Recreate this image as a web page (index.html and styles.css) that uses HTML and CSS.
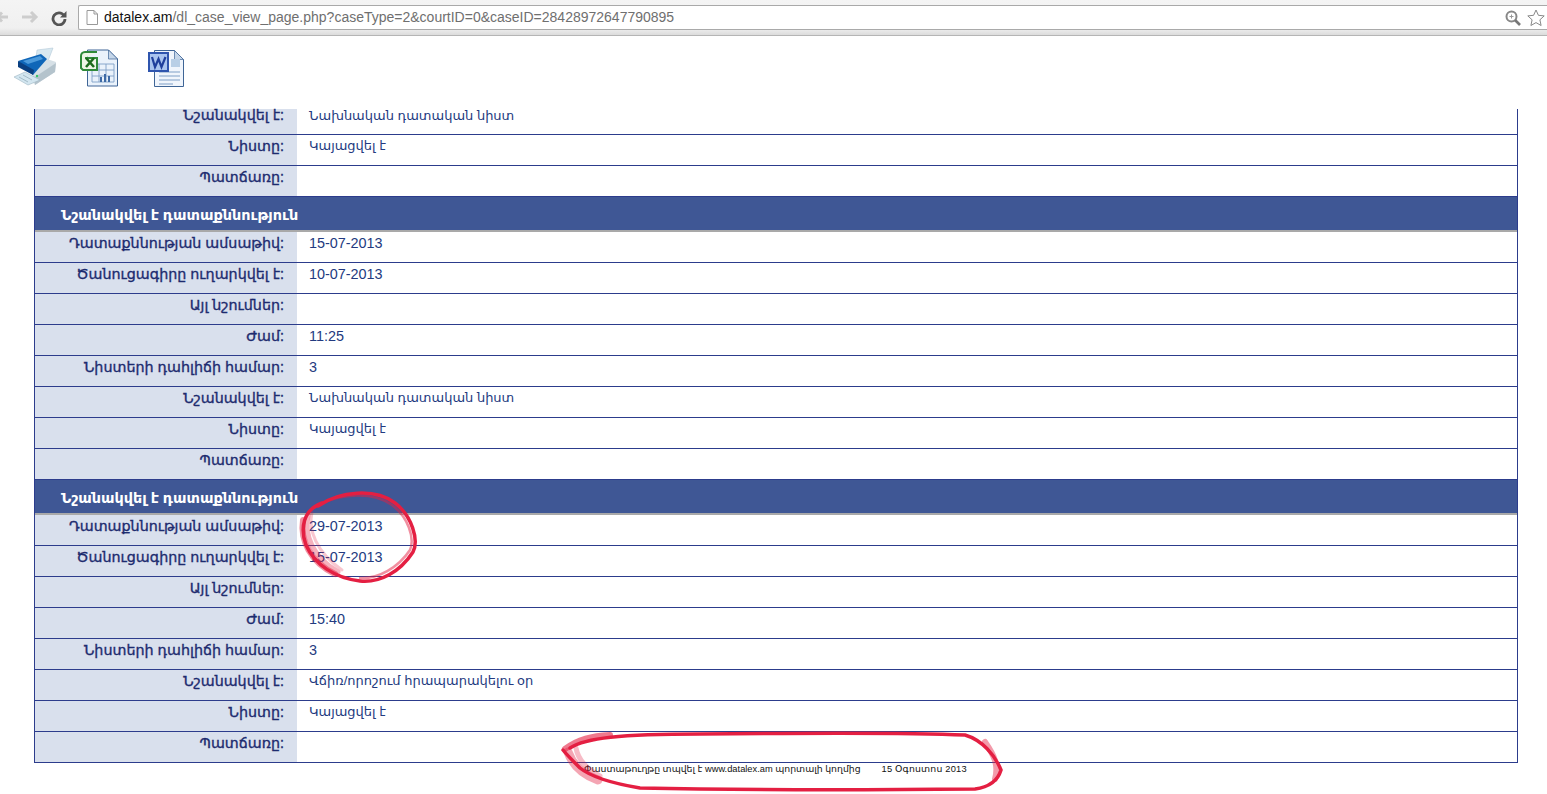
FILE: index.html
```html
<!DOCTYPE html>
<html lang="hy">
<head>
  <meta charset="UTF-8" />
  <title>datalex.am</title>
  <link rel="stylesheet" href="styles.css">
</head>
<body>

  <!-- Browser toolbar -->
  <div class="chrome">
    <svg class="nav-icon back" width="14" height="14" viewBox="0 0 14 14"><path d="M13 7H3M7 2.500 2.500 7 7 11.500" fill="none" stroke="#cdcdcd" stroke-width="3"/></svg>
    <svg class="nav-icon" width="18" height="14" viewBox="0 0 18 14"><path d="M1 7h14M10 2l5 5-5 5" fill="none" stroke="#cdcdcd" stroke-width="3"/></svg>
    <svg class="nav-icon" width="16" height="16" viewBox="0 0 16 16"><path d="M13 5.500A6 6 0 1 0 14 9" fill="none" stroke="#555" stroke-width="2.800"/><path d="M15.500 1v6.500H9z" fill="#555"/></svg>
    <div class="address">
      <svg width="12" height="15" viewBox="0 0 12 15"><path d="M1 .5h7l3.500 3.500v10.500H1z M8 .5V4h3.500" fill="#fff" stroke="#999"/></svg>
      <span class="url"><b>datalex.am</b>/dl_case_view_page.php?caseType=2&amp;courtID=0&amp;caseID=28428972647790895</span>
      <svg class="zoom-icon" width="16" height="16" viewBox="0 0 16 16"><circle cx="6.500" cy="6.500" r="5" fill="none" stroke="#888" stroke-width="2"/><path d="M10 10l5 5" stroke="#777" stroke-width="2.600"/><path d="M4.500 6.500h4M6.500 4.500v4" stroke="#999"/></svg>
      <svg width="18" height="18" viewBox="0 0 18 18"><path d="M9 1l2.400 5.300 5.800.6-4.300 3.900 1.200 5.700L9 13.600l-5.100 2.900 1.200-5.700L.8 6.900l5.800-.6z" fill="#fff" stroke="#888"/></svg>
    </div>
  </div>

  <!-- Export icons -->
  <div class="tools">
    <svg class="tool-printer" width="44" height="40" viewBox="0 0 44 40">
      <path d="M24 3 40 1l-5 13-12-3z" fill="#d8e8f0" stroke="#b3cad8" stroke-width=".6"/>
      <path d="M20 24 34 12l9 3-1 10-20 13-3-4z" fill="#d6e0e6"/>
      <path d="M22 30 43 16l-1 9-20 13z" fill="#b4c3cc"/>
      <path d="M5 14 28 7l6 5-14 16z" fill="#0f66b8"/>
      <path d="M10 14 27 9l3 3-15 5z" fill="#4d9bdc"/>
      <path d="M5 14v6l15 8 1-5z" fill="#0a3f80"/>
      <path d="M1 30l11-5 15 8-12 5z" fill="#d3e6f0" stroke="#9db5c3" stroke-width=".6"/>
      <path d="M6 30l9 5M10 28l9 5" stroke="#9db5c3" stroke-width=".9"/>
      <circle cx="24" cy="29" r="1.200" fill="#37c46b"/>
    </svg>
    <svg class="tool-excel" width="38" height="38" viewBox="0 0 38 38">
      <path d="M7.500 1h21l9 9v27h-30z" fill="#eaf2fb" stroke="#3f6596"/>
      <path d="M28.500 1v9h9z" fill="#c5d6e9" stroke="#3f6596" stroke-width=".7"/>
      <path d="M12 15h22v18H12zM12 21h22M12 27h22M19 15v18M26 15v18" fill="none" stroke="#7f9fc6" stroke-width=".9"/>
      <path d="M21 33v-5M25 33v-8M29 33v-6" stroke="#3e6aa6" stroke-width="2"/>
      <path d="M17 3H5C2.500 3 1 5 1 7v12l2 2h14V9H5" fill="#eef6e6" stroke="#2f8a3a" stroke-width="2"/>
      <path d="M6 9l8 9M14 9l-8 9" stroke="#1d6b1d" stroke-width="2.600"/>
    </svg>
    <svg class="tool-word" width="37" height="38" viewBox="0 0 37 38">
      <path d="M6.500 .5h20l9 9v27h-29z" fill="#f0f5fc" stroke="#3f6596"/>
      <path d="M26.500 .5v9h9z" fill="#c5d6e9" stroke="#3f6596" stroke-width=".7"/>
      <path d="M23 9h9v8h-9z" fill="#b9cfe6"/>
      <path d="M11 22h21M11 26h21M11 30h21M11 34h14" stroke="#7f9fc6"/>
      <rect x="1" y="3" width="19" height="18" fill="#a9c4ef" stroke="#2f55ae" stroke-width="2"/>
      <path d="M4 7l3 10 3.500-8 3 8 4-10" fill="none" stroke="#1f3f9c" stroke-width="2.200"/>
    </svg>
  </div>

  <!-- Case sessions -->
  <div class="sessions">
    <table class="case-table">
      <tr class="row-cut"><th>Նշանակվել է:</th><td>Նախնական դատական նիստ</td></tr>
      <tr><th>Նիստը:</th><td>Կայացվել է</td></tr>
      <tr><th>Պատճառը:</th><td></td></tr>
      <tr class="row-head"><td colspan="2">Նշանակվել է դատաքննություն</td></tr>
      <tr><th>Դատաքննության ամսաթիվ:</th><td class="num">15-07-2013</td></tr>
      <tr><th>Ծանուցագիրը ուղարկվել է:</th><td class="num">10-07-2013</td></tr>
      <tr><th>Այլ նշումներ:</th><td></td></tr>
      <tr><th>Ժամ:</th><td class="num">11:25</td></tr>
      <tr><th>Նիստերի դահլիճի համար:</th><td class="num">3</td></tr>
      <tr><th>Նշանակվել է:</th><td>Նախնական դատական նիստ</td></tr>
      <tr><th>Նիստը:</th><td>Կայացվել է</td></tr>
      <tr><th>Պատճառը:</th><td></td></tr>
      <tr class="row-head"><td colspan="2">Նշանակվել է դատաքննություն</td></tr>
      <tr><th>Դատաքննության ամսաթիվ:</th><td class="num">29-07-2013</td></tr>
      <tr><th>Ծանուցագիրը ուղարկվել է:</th><td class="num">15-07-2013</td></tr>
      <tr><th>Այլ նշումներ:</th><td></td></tr>
      <tr><th>Ժամ:</th><td class="num">15:40</td></tr>
      <tr><th>Նիստերի դահլիճի համար:</th><td class="num">3</td></tr>
      <tr><th>Նշանակվել է:</th><td>Վճիռ/որոշում հրապարակելու օր</td></tr>
      <tr><th>Նիստը:</th><td>Կայացվել է</td></tr>
      <tr><th>Պատճառը:</th><td></td></tr>
    </table>
    <p class="printed"><span>Փաստաթուղթը տպվել է www.datalex.am պորտալի կողմից</span><span class="printed-date">15 Օգոստոս 2013</span></p>
  </div>

  <!-- Red marker scribbles drawn over the screenshot -->
  <svg class="marks" width="1547" height="794" viewBox="0 0 1547 794">
    <g fill="none" stroke="#e41f42" stroke-linecap="round">
      <path d="M318 506C340 491 375 488 395 503C412 516 419 540 413 552C400 572 380 583 360 581C335 578 315 565 306 545C300 528 303 510 322 503" stroke-width="3.500"/>
      <path d="M320 504C342 494 372 491 392 505C408 517 415 538 410 550C398 568 378 579 360 578" stroke-width="2.500" opacity=".5"/>
      <path d="M303 520C300 540 310 562 335 574" stroke-width="6" opacity=".5"/>
      <path d="M308 515C304 535 312 556 338 572" stroke-width="5" opacity=".35"/>
      <path d="M312 512C308 530 316 552 342 570" stroke-width="3" opacity=".25"/>
      <path d="M570 748C585 738 620 734 700 734C800 733 900 732 965 735C982 740 995 755 1001 770C998 780 990 787 975 789C860 790 740 790 640 788C610 783 590 776 580 768C572 760 567 755 563 750" stroke-width="3.500"/>
      <path d="M565 749C578 739 592 736 610 735" stroke-width="6" opacity=".6"/>
      <path d="M568 752C573 766 584 775 598 780" stroke-width="9" opacity=".4"/>
      <path d="M576 748C578 760 588 770 600 776" stroke-width="5" opacity=".3"/>
      <path d="M985 742C994 755 999 765 995 779" stroke-width="6" opacity=".45"/>
    </g>
  </svg>

</body>
</html>
```

FILE: styles.css
```css
/* Base Styles */
html, body {
  height: 100%;
}
body {
  margin: 0;
  position: relative;
  overflow: hidden;
  background: #fff;
  font-family: "Liberation Sans", "DejaVu Sans", Arial, sans-serif;
}

/* Browser toolbar */
.chrome {
  height: 36px;
  box-sizing: border-box;
  padding: 5px 0 0;
  display: flex;
  align-items: flex-start;
  background: linear-gradient(#f4f4f4, #f0f0f0 28px, #dcdcdc);
  border-bottom: 1px solid #b5b5b5;
}
.nav-icon {
  margin: 5px 0 0 12px;
  flex: none;
}
.nav-icon.back {
  margin-left: -5px;
}
.address {
  flex: 1;
  height: 25px;
  box-sizing: border-box;
  margin-left: 11px;
  padding: 0 2px 0 7px;
  display: flex;
  align-items: center;
  background: #fff;
  border: 1px solid #a9a9a9;
  border-right: 0;
  border-radius: 2px 0 0 2px;
}
.url {
  flex: 1;
  margin: 0 0 2px 6px;
  font-size: 14px;
  color: #6f6f6f;
}
.url b {
  font-weight: normal;
  color: #111;
}
.zoom-icon {
  margin-right: 6px;
}

/* Export icons */
.tools {
  height: 73px;
  box-sizing: border-box;
  padding: 11px 0 0 13px;
  display: flex;
  align-items: flex-start;
}
.tool-excel {
  margin: 2px 0 0 23px;
}
.tool-word {
  margin: 3px 0 0 30px;
}

/* Case table */
.sessions {
  margin: 0 29px 0 34px;
}
.case-table {
  width: 100%;
  table-layout: fixed;
  border-collapse: separate;
  border-spacing: 0;
  border-left: 1px solid #2c3c8c;
  border-right: 1px solid #2c3c8c;
}
.case-table th,
.case-table td {
  padding: 1px 0 0;
  height: 29px;
  box-sizing: content-box;
  border-bottom: 1px solid #2c3c8c;
  vertical-align: top;
  line-height: 20px;
}
.case-table th {
  width: 249px;
  padding-right: 13px;
  text-align: right;
  font-size: 14.3px;
  font-weight: normal;
  -webkit-text-stroke: .35px #1d2b6f;
  color: #1d2b6f;
  background: #d9e0ed;
}
.case-table td {
  padding-left: 12px;
  font-size: 13px;
  color: #233a80;
}
.case-table td.num {
  font-size: 14.4px;
}
.case-table .row-cut th,
.case-table .row-cut td {
  height: 25px;
  padding-top: 0;
  line-height: 13px;
}
.case-table .row-head td {
  height: 30px;
  padding: 3px 0 0 26px;
  background: #3f5795;
  border-bottom: 2px solid #a9a9a9;
  color: #fff;
  font-size: 14.4px;
  font-weight: bold;
  line-height: 30px;
}

.printed {
  margin: 0;
  padding: 0 0 0 550px;
  display: flex;
  gap: 21px;
  font-size: 9.3px;
  line-height: 13px;
  color: #111;
}
.printed-date {
  letter-spacing: .2px;
}

/* Marker overlay */
.marks {
  position: absolute;
  left: 0;
  top: 0;
  pointer-events: none;
}
```
